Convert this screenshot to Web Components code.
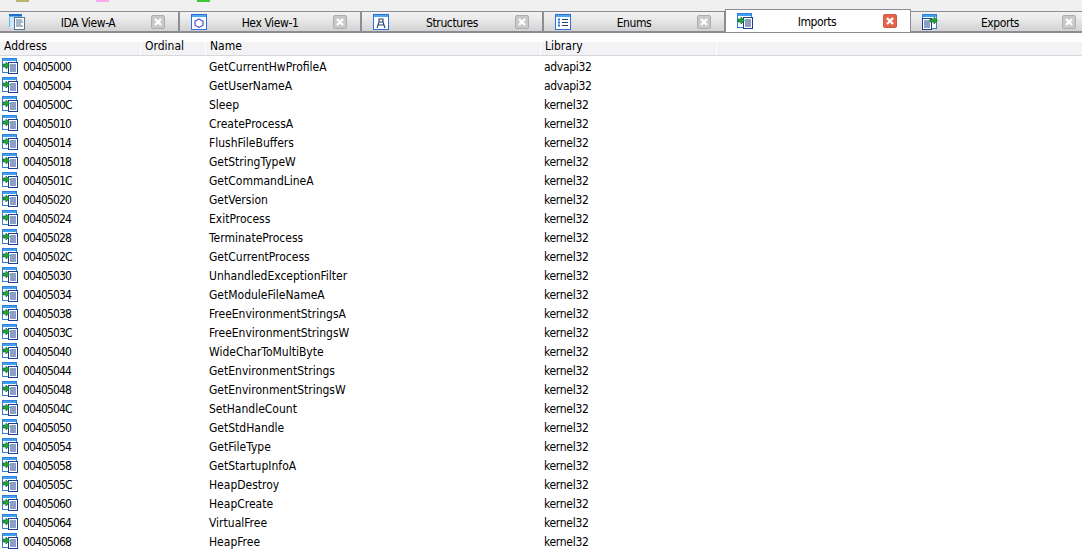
<!DOCTYPE html>
<html>
<head>
<meta charset="utf-8">
<title>Imports</title>
<style>
    html, body { margin: 0; padding: 0; background: #fff; overflow: hidden; }
    body { font: 12px "DejaVu Sans Condensed", "DejaVu Sans", sans-serif; font-stretch: condensed; color: #000; }
</style>
</head>
<body>
<ida-window></ida-window>
<script>
const ICON_FRAME = `
    <rect x="0.5" y="0.5" width="15" height="15" fill="#fff" stroke="#2f6fd8"/>
    <rect x="1" y="1" width="14" height="2" fill="#4fa8f0"/>`;

const ICONS = {
    view: `
        <rect x="0" y="0" width="13" height="13" fill="#5db4f4"/>
        <rect x="0" y="0" width="13" height="2" fill="#1f6fd0"/>
        <rect x="1" y="3" width="9" height="11" fill="#cfe8fb"/>
        <rect x="5.5" y="3.5" width="10" height="12" fill="#fff" stroke="#5a7390"/>
        <path d="M7 6h6M7 8h7M7 10h5M7 12h7" stroke="#53708f" fill="none"/>`,
    hex: ICON_FRAME + `
        <path d="M8 5l4 2.2v4L8 13.5l-4-2.3v-4z" fill="#fff" stroke="#5a5ce0" stroke-width="1.3"/>`,
    struct: ICON_FRAME + `
        <path d="M6 5h4v3H6zM6 8l-2 6M10 8l2 6M5 11h6" fill="none" stroke="#27406e" stroke-width="1.1"/>`,
    enums: ICON_FRAME + `
        <path d="M3 5.5h2M3 8.5h2M3 11.5h2" stroke="#1f6fd0" stroke-width="2" fill="none"/>
        <path d="M7 5.5h6M7 8.5h6M7 11.5h6" stroke="#27406e" fill="none"/>`,
    imports: `
        <rect x="0.5" y="0.5" width="14" height="14" fill="#fff" stroke="#2f7fd8"/>
        <rect x="1" y="1" width="13" height="2" fill="#3f9ff0"/>
        <rect x="6.5" y="4.5" width="9" height="11" fill="#fff" stroke="#1d3f8f"/>
        <path d="M8 7h6M8 9h6M8 11h6M8 13h6" stroke="#1d3f8f" fill="none"/>
        <path d="M7.5 7.5L4 4v2H1v3h3v2z" fill="#22a838" stroke="#0c5a18" stroke-width="0.6"/>`,
    exports: `
        <rect x="0.5" y="0.5" width="14" height="14" fill="#fff" stroke="#2f7fd8"/>
        <rect x="1" y="1" width="13" height="2" fill="#3f9ff0"/>
        <rect x="0.5" y="4.5" width="9" height="11" fill="#fff" stroke="#1d3f8f"/>
        <path d="M2 7h6M2 9h6M2 11h6M2 13h6" stroke="#1d3f8f" fill="none"/>
        <path d="M15.5 6.5L12 3v2H8v3h4v2z" fill="#22a838" stroke="#0c5a18" stroke-width="0.6"/>`
};

class IdaIcon extends HTMLElement {
    constructor() {
        super();
        this.attachShadow({ mode: 'open' });
    }

    connectedCallback() {
        const name = this.getAttribute('name');
        this.shadowRoot.innerHTML = `
            <style>
                :host { display: block; width: 16px; height: 16px; }
                svg { display: block; }
            </style>
            <svg width="16" height="16" viewBox="0 0 16 16">${ICONS[name]}</svg>
        `;
    }
}

class IdaLegend extends HTMLElement {
    constructor() {
        super();
        this.attachShadow({ mode: 'open' });
    }

    connectedCallback() {
        this.shadowRoot.innerHTML = `
            <style>
                :host { display: block; height: 11px; overflow: hidden; background: #f0f0f0; }
                .items { display: flex; margin-top: -12px; padding-left: 16px; height: 14px; }
                .chip { width: 13px; height: 14px; flex: none; }
                span { font-size: 11px; line-height: 14px; margin-left: 4px; white-space: nowrap; }
                .unexplored { width: 63px; }
                .external { width: 84px; }
            </style>
            <div class="items">
                <div class="chip" style="background:#b9b56f"></div>
                <span class="unexplored">Unexplored</span>
                <div class="chip" style="background:#ffa8ee"></div>
                <span class="external">External symbol</span>
                <div class="chip" style="background:#38c838"></div>
            </div>
        `;
    }
}

class IdaTab extends HTMLElement {
    constructor() {
        super();
        this.attachShadow({ mode: 'open' });
    }

    connectedCallback() {
        this.shadowRoot.innerHTML = `
            <style>
                :host {
                    display: grid;
                    grid-template-columns: 16px 1fr 14px;
                    align-items: center;
                    flex: none;
                    box-sizing: border-box;
                    height: 22px;
                    padding: 0 13px 0 11px;
                    border-top: 1px solid #8c8c94;
                    border-bottom: 2px solid #8c8c94;
                    border-right: 2px solid #8c8c94;
                    background: linear-gradient(#f2f2f2, #ececec 30%, #d2d2d2);
                }
                :host([active]) {
                    height: 24px;
                    margin-top: -2px;
                    background: #fff;
                    border: 1px solid #8c8c94;
                }
                .label { text-align: center; padding-top: 3px; letter-spacing: -0.4px; }
                :host([active]) .label { padding-top: 1px; padding-right: 2px; }
                .close {
                    box-sizing: border-box;
                    width: 14px;
                    height: 14px;
                    border: 1px solid #adadad;
                    border-radius: 2px;
                    background: #c9c9c9;
                }
                .close svg { display: block; }
                :host([active]) .close { background: #e4654a; border-color: #d05a42; }
            </style>
            <ida-icon name="${this.getAttribute('icon')}"></ida-icon>
            <div class="label"><slot></slot></div>
            <div class="close">
                <svg width="12" height="12" viewBox="0 0 12 12">
                    <path d="M3 3l6 6M9 3l-6 6" stroke="#fff" stroke-width="2.4" fill="none"/>
                </svg>
            </div>
        `;
    }
}

class IdaTabBar extends HTMLElement {
    constructor() {
        super();
        this.attachShadow({ mode: 'open' });
    }

    connectedCallback() {
        this.shadowRoot.innerHTML = `
            <style>
                :host { display: flex; height: 22px; background: #f0f0f0; }
                ida-tab { width: 182px; }
                .first { margin-left: -2px; }
                .active { width: 186px; margin-left: -1px; }
                .exports { width: 180px; }
            </style>
            <ida-tab class="first" icon="view">IDA View-A</ida-tab>
            <ida-tab icon="hex">Hex View-1</ida-tab>
            <ida-tab icon="struct">Structures</ida-tab>
            <ida-tab icon="enums">Enums</ida-tab>
            <ida-tab class="active" icon="imports" active>Imports</ida-tab>
            <ida-tab class="exports" icon="exports">Exports</ida-tab>
        `;
    }
}

const COLUMNS = '141px 65px 335px 176px 1fr';

class IdaTableHeader extends HTMLElement {
    constructor() {
        super();
        this.attachShadow({ mode: 'open' });
    }

    connectedCallback() {
        this.shadowRoot.innerHTML = `
            <style>
                :host {
                    display: grid;
                    grid-template-columns: ${COLUMNS};
                    height: 23px;
                    box-sizing: border-box;
                    border-bottom: 1px solid #d8d8da;
                    background: linear-gradient(#fff 0, #fff 9px, #f3f3f5 9px, #f3f3f5 100%);
                }
                div {
                    box-sizing: border-box;
                    padding: 4px 0 0 4px;
                    line-height: 18px;
                    border-right: 1px solid #fff;
                }
                div:first-child { padding-left: 2px; letter-spacing: -0.3px; }
                div:last-child { border-right: 0; }
            </style>
            <div>Address</div>
            <div>Ordinal</div>
            <div>Name</div>
            <div>Library</div>
            <div></div>
        `;
    }
}

class IdaImportRow extends HTMLElement {
    constructor() {
        super();
        this.attachShadow({ mode: 'open' });
    }

    connectedCallback() {
        this.shadowRoot.innerHTML = `
            <style>
                :host {
                    display: grid;
                    grid-template-columns: ${COLUMNS};
                    height: 19px;
                    line-height: 21px;
                    white-space: nowrap;
                    overflow: hidden;
                }
                .addr { display: flex; gap: 5px; padding-left: 2px; letter-spacing: -0.85px; }
                ida-icon { margin-top: 1px; }
                .name, .lib { padding-left: 3px; }
                .lib { letter-spacing: -0.3px; }
            </style>
            <div class="addr"><ida-icon name="imports"></ida-icon>${this.getAttribute('addr')}</div>
            <div></div>
            <div class="name">${this.getAttribute('name')}</div>
            <div class="lib">${this.getAttribute('lib')}</div>
        `;
    }
}

const IMPORTS = [
    ['00405000', 'GetCurrentHwProfileA', 'advapi32'],
    ['00405004', 'GetUserNameA', 'advapi32'],
    ['0040500C', 'Sleep', 'kernel32'],
    ['00405010', 'CreateProcessA', 'kernel32'],
    ['00405014', 'FlushFileBuffers', 'kernel32'],
    ['00405018', 'GetStringTypeW', 'kernel32'],
    ['0040501C', 'GetCommandLineA', 'kernel32'],
    ['00405020', 'GetVersion', 'kernel32'],
    ['00405024', 'ExitProcess', 'kernel32'],
    ['00405028', 'TerminateProcess', 'kernel32'],
    ['0040502C', 'GetCurrentProcess', 'kernel32'],
    ['00405030', 'UnhandledExceptionFilter', 'kernel32'],
    ['00405034', 'GetModuleFileNameA', 'kernel32'],
    ['00405038', 'FreeEnvironmentStringsA', 'kernel32'],
    ['0040503C', 'FreeEnvironmentStringsW', 'kernel32'],
    ['00405040', 'WideCharToMultiByte', 'kernel32'],
    ['00405044', 'GetEnvironmentStrings', 'kernel32'],
    ['00405048', 'GetEnvironmentStringsW', 'kernel32'],
    ['0040504C', 'SetHandleCount', 'kernel32'],
    ['00405050', 'GetStdHandle', 'kernel32'],
    ['00405054', 'GetFileType', 'kernel32'],
    ['00405058', 'GetStartupInfoA', 'kernel32'],
    ['0040505C', 'HeapDestroy', 'kernel32'],
    ['00405060', 'HeapCreate', 'kernel32'],
    ['00405064', 'VirtualFree', 'kernel32'],
    ['00405068', 'HeapFree', 'kernel32']
];

class IdaWindow extends HTMLElement {
    constructor() {
        super();
        this.attachShadow({ mode: 'open' });
    }

    connectedCallback() {
        const rows = IMPORTS.map(([addr, name, lib]) =>
            `<ida-import-row addr="${addr}" name="${name}" lib="${lib}"></ida-import-row>`).join('');
        this.shadowRoot.innerHTML = `
            <style>
                :host { display: block; height: 549px; overflow: hidden; background: #fff; }
                .tabs { overflow: hidden; margin-top: -2px; padding-top: 2px; }
                .list { padding-top: 1px; }
            </style>
            <ida-legend></ida-legend>
            <div class="tabs"><ida-tab-bar></ida-tab-bar></div>
            <ida-table-header></ida-table-header>
            <div class="list">${rows}</div>
        `;
    }
}

customElements.define('ida-icon', IdaIcon);
customElements.define('ida-legend', IdaLegend);
customElements.define('ida-tab', IdaTab);
customElements.define('ida-tab-bar', IdaTabBar);
customElements.define('ida-table-header', IdaTableHeader);
customElements.define('ida-import-row', IdaImportRow);
customElements.define('ida-window', IdaWindow);
</script>
</body>
</html>
